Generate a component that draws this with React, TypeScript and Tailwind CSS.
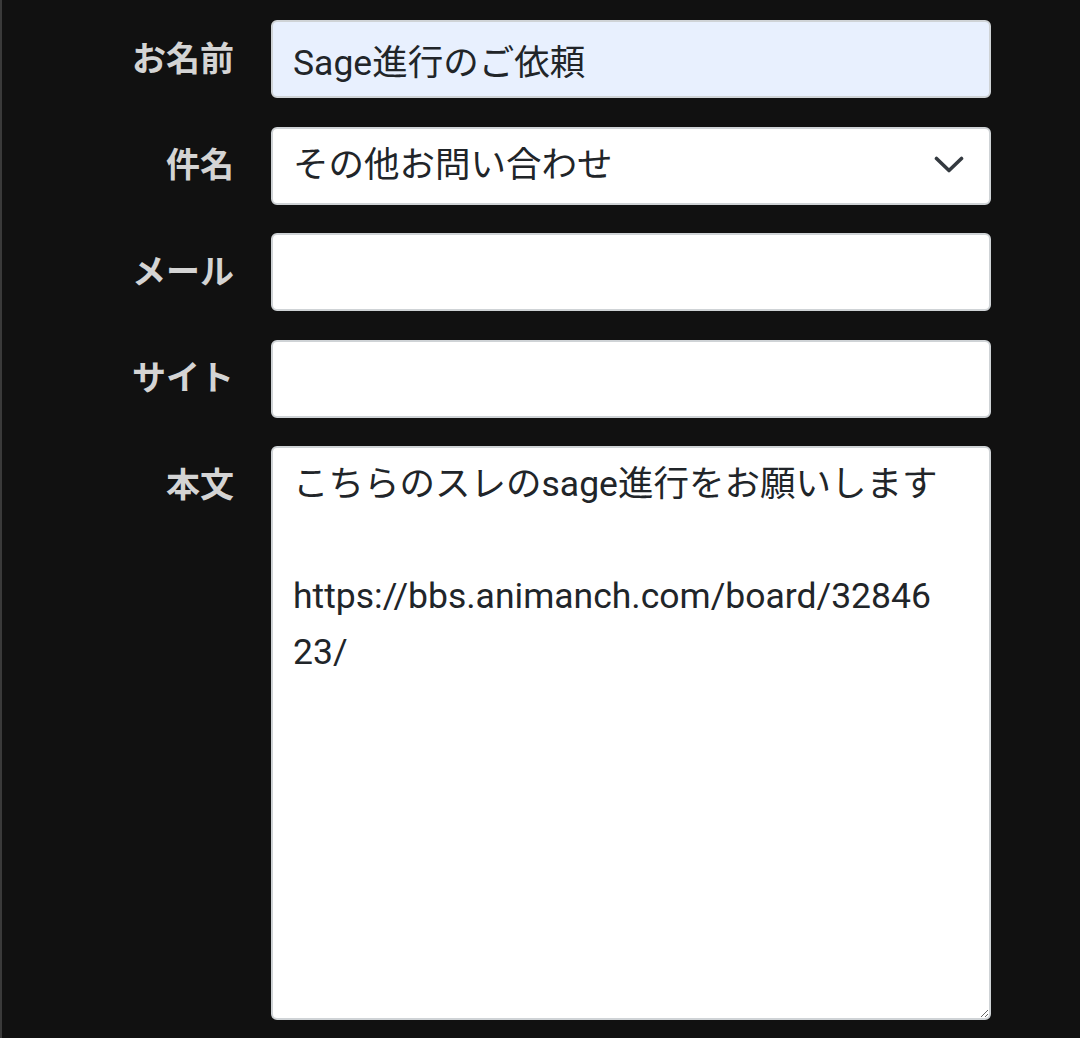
import { useState } from 'react';

const labelCls =
  'h-[78px] flex items-center justify-end font-bold text-[34px] text-[#d4d4d4]';
const inputCls =
  'w-full h-[78px] rounded-[6px] border-2 border-[#cfd3d6] pl-[20px] pr-[18px] text-[35.5px] text-[#212529] outline-none';

const App = () => {
  const [subject, setSubject] = useState('その他お問い合わせ');

  return (
    <div
      className="min-h-[1038px] w-full bg-[#111111] border-l-2 border-[#3a3a3a]"
      style={{ fontFamily: 'Roboto, "Noto Sans CJK JP", sans-serif' }}
    >
      <form className="grid grid-cols-[232px_720px] gap-x-[37px] gap-y-[28.5px] pt-[20px]">
        <label className={labelCls}>お名前</label>
        <input
          className={`${inputCls} bg-[#e8f0fe]`}
          defaultValue="Sage進行のご依頼"
        />

        <label className={labelCls}>件名</label>
        <div className="relative">
          <select
            className={`${inputCls} appearance-none bg-white`}
            value={subject}
            onChange={(e) => setSubject(e.target.value)}
          >
            <option>その他お問い合わせ</option>
            <option>削除依頼</option>
            <option>不具合報告</option>
          </select>
          <svg
            className="absolute right-[27px] top-[29px] pointer-events-none"
            width="30"
            height="18"
            viewBox="0 0 30 18"
            fill="none"
          >
            <path
              d="M2.5 2.5 L15 14.5 L27.5 2.5"
              stroke="#343a40"
              strokeWidth="3.6"
              strokeLinecap="round"
              strokeLinejoin="round"
            />
          </svg>
        </div>

        <label className={labelCls}>メール</label>
        <input className={`${inputCls} bg-white`} type="email" />

        <label className={labelCls}>サイト</label>
        <input className={`${inputCls} bg-white`} type="url" />

        <label className={labelCls}>本文</label>
        <textarea
          className="w-full h-[574px] rounded-[6px] border-2 border-[#cfd3d6] bg-white pl-[20px] pr-[43px] pt-[8px] text-[35.5px] leading-[56px] text-[#212529] outline-none break-words resize-y"
          defaultValue={
            'こちらのスレのsage進行をお願いします\n\nhttps://bbs.animanch.com/board/3284623/'
          }
        />
      </form>
    </div>
  );
};

export default App;
